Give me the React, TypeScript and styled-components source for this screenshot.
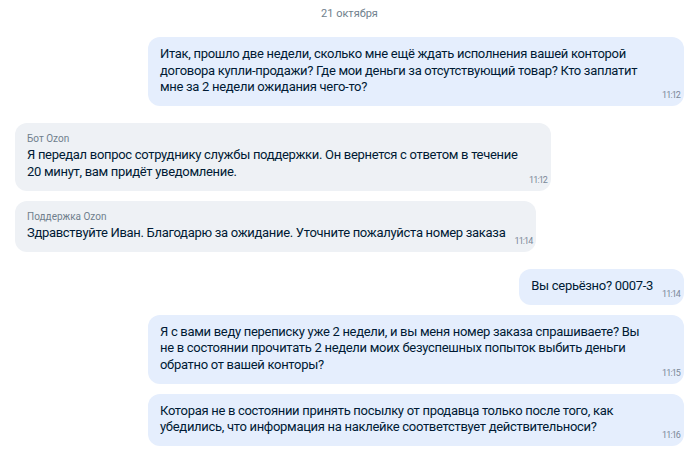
import styled, { createGlobalStyle } from 'styled-components';

type Side = 'in' | 'out';

interface Message {
  side: Side;
  sender?: string;
  text: string;
  time: string;
  grouped?: boolean;
}

const messages: Message[] = [
  {
    side: 'out',
    text: 'Итак, прошло две недели, сколько мне ещё ждать исполнения вашей конторой договора купли-продажи? Где мои деньги за отсутствующий товар? Кто заплатит мне за 2 недели ожидания чего-то?',
    time: '11:12',
  },
  {
    side: 'in',
    sender: 'Бот Ozon',
    text: 'Я передал вопрос сотруднику службы поддержки. Он вернется с ответом в течение 20 минут, вам придёт уведомление.',
    time: '11:12',
  },
  {
    side: 'in',
    sender: 'Поддержка Ozon',
    text: 'Здравствуйте Иван. Благодарю за ожидание. Уточните пожалуйста номер заказа',
    time: '11:14',
    grouped: true,
  },
  { side: 'out', text: 'Вы серьёзно? 0007-3', time: '11:14' },
  {
    side: 'out',
    text: 'Я с вами веду переписку уже 2 недели, и вы меня номер заказа спрашиваете? Вы не в состоянии прочитать 2 недели моих безуспешных попыток выбить деньги обратно от вашей конторы?',
    time: '11:15',
    grouped: true,
  },
  {
    side: 'out',
    text: 'Которая не в состоянии принять посылку от продавца только после того, как убедились, что информация на наклейке соответствует действительноси?',
    time: '11:16',
    grouped: true,
  },
];

export default function App() {
  return (
    <>
      <GlobalStyle />
      <StyledChat>
        <StyledDate>21 октября</StyledDate>
        <StyledMessages>
          {messages.map((message, idx) => (
            <StyledRow key={`msg-${idx}`} $side={message.side} $grouped={!!message.grouped}>
              <StyledBubble $side={message.side}>
                {message.sender && <StyledSender>{message.sender}</StyledSender>}
                {message.text}
                <StyledTime>{message.time}</StyledTime>
              </StyledBubble>
            </StyledRow>
          ))}
        </StyledMessages>
      </StyledChat>
    </>
  );
}

const GlobalStyle = createGlobalStyle`
  body {
    margin: 0;
    background: #ffffff;
    font-family: Roboto, 'Liberation Sans', sans-serif;
  }
`;

const StyledChat = styled.div`
  width: 700px;
  padding: 6px 16px 0 15px;
  box-sizing: border-box;
  display: flex;
  flex-direction: column;
`;

const StyledDate = styled.div`
  text-align: center;
  font-size: 11px;
  line-height: 16px;
  color: #707f8d;
  margin-bottom: 15px;
`;

const StyledMessages = styled.div`
  display: flex;
  flex-direction: column;
`;

const StyledRow = styled.div<{ $side: Side; $grouped: boolean }>`
  display: flex;
  justify-content: ${({ $side }) => ($side === 'out' ? 'flex-end' : 'flex-start')};
  margin-top: ${({ $grouped }) => ($grouped ? '10px' : '17px')};
  &:first-child {
    margin-top: 0;
  }
`;

/* справа запас под время, само время залезает в этот отступ */
const StyledBubble = styled.div<{ $side: Side }>`
  display: flow-root;
  max-width: 536px;
  box-sizing: border-box;
  padding: 9px 31px 5px 12px;
  border-radius: 12px;
  background: ${({ $side }) => ($side === 'out' ? '#e5eefd' : '#eef1f5')};
  color: #001a34;
  font-size: 13px;
  line-height: 16.5px;
  letter-spacing: -0.3px;
`;

const StyledSender = styled.div`
  font-size: 10px;
  line-height: 13px;
  letter-spacing: 0;
  color: #707f8d;
  margin-bottom: 2px;
`;

const StyledTime = styled.span`
  float: right;
  margin: 10px -27px 0 8px;
  font-size: 9px;
  line-height: 12px;
  letter-spacing: -0.9px;
  color: #7b8898;
`;
